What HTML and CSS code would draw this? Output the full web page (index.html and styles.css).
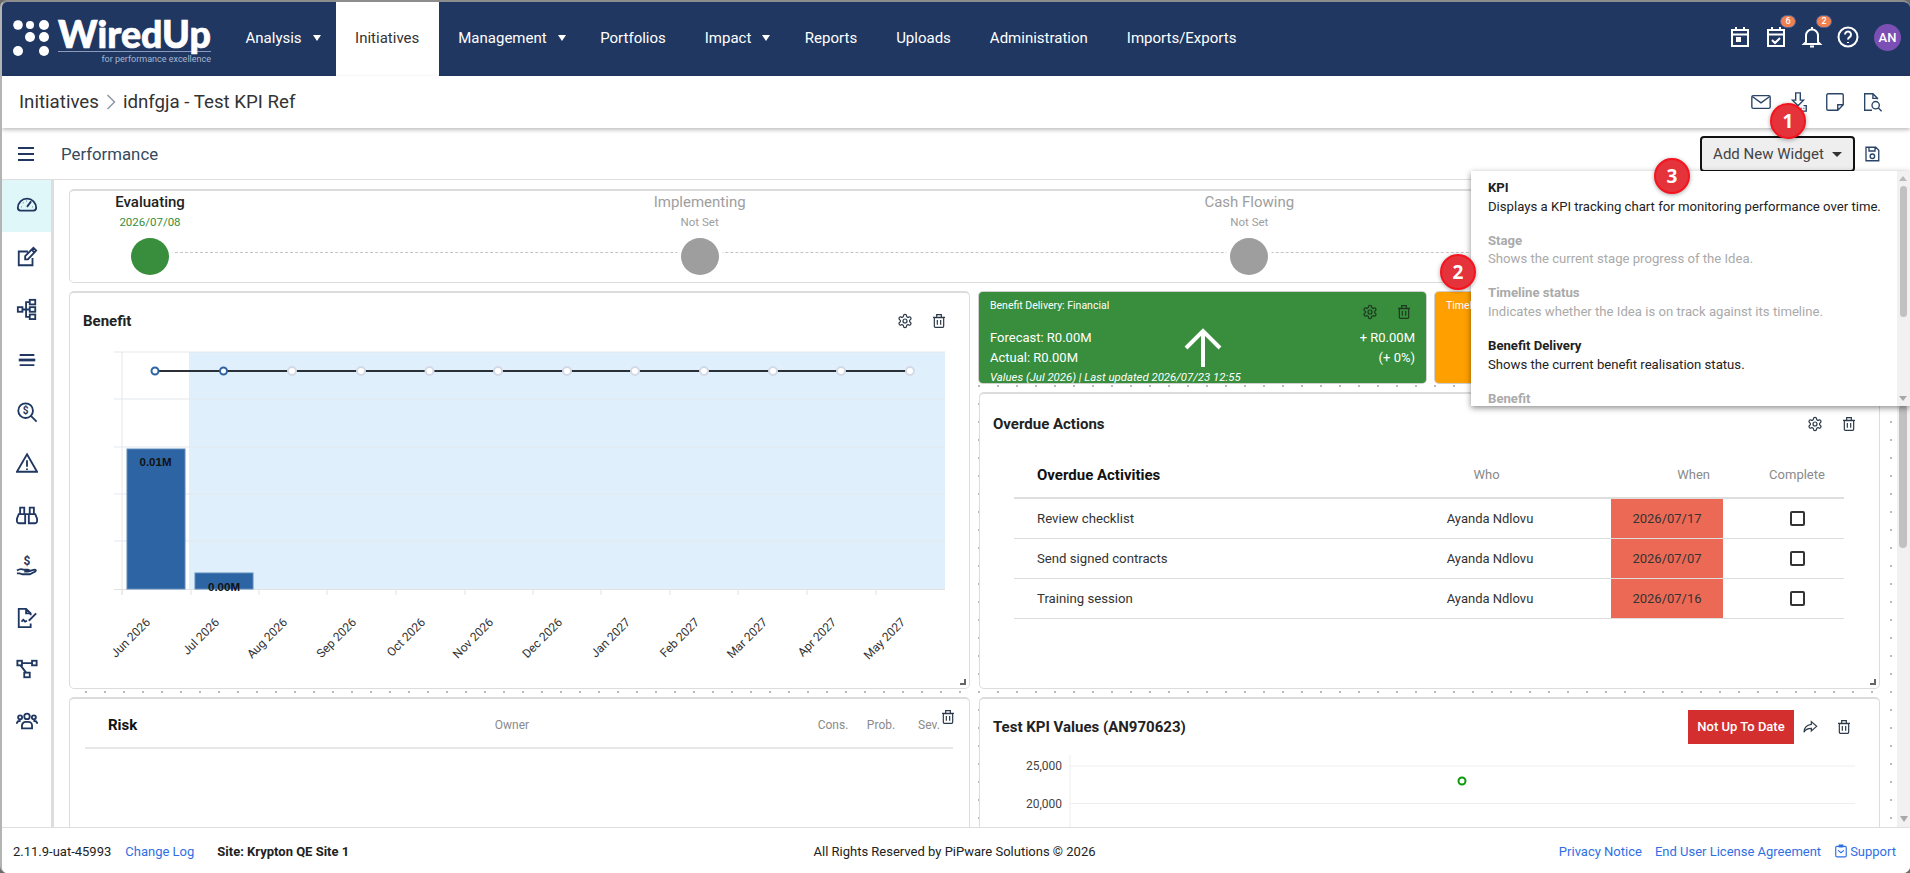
FILE: index.html
```html
<!DOCTYPE html>
<html lang="en">
<head>
  <meta charset="UTF-8">
  <title>WiredUp - Performance</title>
  <link rel="stylesheet" href="styles.css">
</head>
<body>
  <svg class="sprite" width="0" height="0">
    <defs>
      <symbol id="i-gear" viewBox="0 0 24 24"><path d="M12.22 2h-.44a2 2 0 0 0-2 2v.18a2 2 0 0 1-1 1.73l-.43.25a2 2 0 0 1-2 0l-.15-.08a2 2 0 0 0-2.73.73l-.22.38a2 2 0 0 0 .73 2.73l.15.1a2 2 0 0 1 1 1.72v.51a2 2 0 0 1-1 1.74l-.15.09a2 2 0 0 0-.73 2.73l.22.38a2 2 0 0 0 2.73.73l.15-.08a2 2 0 0 1 2 0l.43.25a2 2 0 0 1 1 1.73V20a2 2 0 0 0 2 2h.44a2 2 0 0 0 2-2v-.18a2 2 0 0 1 1-1.73l.43-.25a2 2 0 0 1 2 0l.15.08a2 2 0 0 0 2.73-.73l.22-.39a2 2 0 0 0-.73-2.73l-.15-.08a2 2 0 0 1-1-1.74v-.5a2 2 0 0 1 1-1.74l.15-.09a2 2 0 0 0 .73-2.73l-.22-.38a2 2 0 0 0-2.73-.73l-.15.08a2 2 0 0 1-2 0l-.43-.25a2 2 0 0 1-1-1.73V4a2 2 0 0 0-2-2z"/><circle cx="12" cy="12" r="3"/></symbol>
      <symbol id="i-trash" viewBox="0 0 24 24"><path d="M5 7h14v13a1.5 1.5 0 0 1-1.5 1.5h-11A1.5 1.5 0 0 1 5 20zM3 6.500h18M8.500 6V2.500h7V6M9.500 10.500v7M14.500 10.500v7"/></symbol>
    </defs>
  </svg>

  <div class="window">
    <header class="topbar">
      <div class="logo">
        <svg class="logo-dots" width="40" height="40" viewBox="0 0 40 40">
          <circle cx="6" cy="8" r="4.800"/><circle cx="18" cy="8" r="4"/><circle cx="32" cy="8" r="5"/>
          <circle cx="18" cy="20" r="5"/><circle cx="32" cy="20" r="5"/>
          <circle cx="6" cy="34" r="5"/><circle cx="32" cy="34" r="5"/>
        </svg>
        <div class="logo-type">
          <div class="logo-word">WiredUp</div>
          <div class="logo-tag">for performance excellence</div>
        </div>
      </div>
      <nav class="nav">
        <a class="nav-item has-caret">Analysis</a>
        <a class="nav-item active">Initiatives</a>
        <a class="nav-item has-caret">Management</a>
        <a class="nav-item">Portfolios</a>
        <a class="nav-item has-caret">Impact</a>
        <a class="nav-item">Reports</a>
        <a class="nav-item">Uploads</a>
        <a class="nav-item">Administration</a>
        <a class="nav-item">Imports/Exports</a>
      </nav>
      <div class="top-icons">
        <span class="top-icon">
          <svg viewBox="0 0 24 24"><path d="M4 5h16v16H4zM4 9.500h16M8 2v4M16 2v4"/><rect class="fill" x="8" y="12" width="5" height="5"/></svg>
        </span>
        <span class="top-icon">
          <svg viewBox="0 0 24 24"><path d="M4 5h16v16H4zM4 9.500h16M8 2v4M16 2v4M8 15l3 3 5-5"/></svg>
          <b class="badge">6</b>
        </span>
        <span class="top-icon">
          <svg viewBox="0 0 24 24"><path d="M6 17V10.500a6 6 0 0 1 12 0V17l2 2H4zM10 21.500h4M12 2v2"/></svg>
          <b class="badge">2</b>
        </span>
        <span class="top-icon">
          <svg viewBox="0 0 24 24"><circle cx="12" cy="12" r="9.500"/><path d="M9 9.500a3 3 0 1 1 4.500 2.600c-1 .6-1.500 1.200-1.500 2.400M12 17v1"/></svg>
        </span>
        <span class="avatar">AN</span>
      </div>
    </header>

    <div class="crumbs">
      <div class="crumb-path">
        <span>Initiatives</span>
        <svg class="crumb-sep" width="10" height="18" viewBox="0 0 10 18"><path d="M1.500 2l7 7-7 7"/></svg>
        <span>idnfgja - Test KPI Ref</span>
      </div>
      <div class="crumb-icons">
        <svg viewBox="0 0 24 24"><rect x="2" y="5" width="20" height="14" rx="1.500"/><path d="M2.500 6l9.500 7 9.500-7"/></svg>
        <svg viewBox="0 0 24 24"><path d="M9.500 2h5v8h3.500l-6 6-6-6h3.500zM3 16v6h18v-6h-3"/><path d="M15 19h1M18 19h1"/></svg>
        <svg viewBox="0 0 24 24"><path d="M4.500 3h15A1.500 1.500 0 0 1 21 4.500V15l-6 6H4.500A1.500 1.500 0 0 1 3 19.500v-15A1.500 1.500 0 0 1 4.500 3zM15 21v-6h6"/></svg>
        <svg viewBox="0 0 24 24"><path d="M12 21H4V3h9l5 5v1M13 3v5h5"/><circle cx="16" cy="15.500" r="4"/><path d="M19 18.500l3.500 3.500"/></svg>
      </div>
    </div>

    <div class="toolbar">
      <svg class="burger" width="18" height="16" viewBox="0 0 18 16"><path d="M1 2h16M1 8h16M1 14h16"/></svg>
      <span class="toolbar-title">Performance</span>
      <button class="add-btn">Add New Widget<i class="btn-caret"></i></button>
      <svg class="save-icon" viewBox="0 0 24 24"><path d="M4 3h13l4 4v14H4zM8 3v5h8V3"/><circle cx="12.500" cy="15" r="3"/></svg>
    </div>

    <div class="workspace">
      <aside class="sidebar">
        <a class="side-item active"><svg viewBox="0 0 24 24"><path d="M2 14a10 10 0 0 1 20 0 3 3 0 0 1-3 3H5a3 3 0 0 1-3-3zM12 13l4.500-6"/><path class="dots" d="M6 13h.5M7.500 8.500h.5M11.500 6.500h.5M18 13h.5"/></svg></a>
        <a class="side-item"><svg viewBox="0 0 24 24"><path d="M13 6H3v15h15v-8M10 14.500V11l9-9 3 3-9 9.500zM17 4l3 3"/></svg></a>
        <a class="side-item"><svg viewBox="0 0 24 24"><rect x="2" y="10" width="5" height="5"/><rect x="15" y="2" width="6" height="5"/><rect x="15" y="10" width="6" height="5"/><rect x="15" y="18" width="6" height="5"/><path d="M7 12.500h4M15 4.500h-4v16h4M11 12.500h4"/></svg></a>
        <a class="side-item"><svg viewBox="0 0 24 24"><path d="M4 6.500h16M4 17.500h16"/><path class="thick" d="M3 12h18"/></svg></a>
        <a class="side-item"><svg viewBox="0 0 24 24"><circle cx="10.500" cy="10.500" r="8"/><path d="M16.500 16.500l6 6"/><text x="10.500" y="14" class="icon-text">$</text></svg></a>
        <a class="side-item"><svg viewBox="0 0 24 24"><path d="M12 2.500L23 21.500H1zM12 9v7M12 18v1.500"/></svg></a>
        <a class="side-item"><svg viewBox="0 0 24 24"><path d="M4.500 4h4.500v7h1v10H3.500A2.500 2.500 0 0 1 1 18.500V16l2-5h1.500zM19.500 4H15v7h-1v10h6.500a2.500 2.500 0 0 0 2.500-2.500V16l-2-5h-1.500zM10 11h4M4 11h5M15 11h5"/></svg></a>
        <a class="side-item"><svg viewBox="0 0 24 24"><path d="M1 17c3-2 5-2 7-1h5c2 0 2 2 0 2H9M13 18l7-2c2 0 2 1 1 2l-6 3H7l-3-1H1"/><text x="12" y="11" class="icon-text big">$</text></svg></a>
        <a class="side-item"><svg viewBox="0 0 24 24"><path d="M16 9V7l-5-5H3v20h13v-4M11 2v5h5M6 16l2-2 2 2 2-1M14 15l8-8"/></svg></a>
        <a class="side-item"><svg viewBox="0 0 24 24"><rect x="1.500" y="3" width="5" height="5"/><rect x="17.500" y="3" width="5" height="5"/><rect x="9" y="16" width="6" height="5"/><path d="M6.500 5.500h11M5 8l6 8"/></svg></a>
        <a class="side-item"><svg viewBox="0 0 24 24"><circle cx="12" cy="7" r="3"/><circle cx="4.500" cy="8" r="2.200"/><circle cx="19.500" cy="8" r="2.200"/><path d="M6.500 20v-3a4 4 0 0 1 4-4h3a4 4 0 0 1 4 4v3zM1 15v-1a3 3 0 0 1 3-2h1M23 15v-1a3 3 0 0 0-3-2h-1"/></svg></a>
      </aside>

      <main class="canvas">
        <div class="board">
          <section class="card stage-card">
            <div class="stage done"><div class="stage-name">Evaluating</div><div class="stage-date">2026/07/08</div><div class="stage-dot"></div></div>
            <div class="stage"><div class="stage-name">Implementing</div><div class="stage-date">Not Set</div><div class="stage-dot"></div></div>
            <div class="stage"><div class="stage-name">Cash Flowing</div><div class="stage-date">Not Set</div><div class="stage-dot"></div></div>
            <div class="stage"><div class="stage-name"></div><div class="stage-date"></div><div class="stage-dot"></div></div>
          </section>

          <section class="card benefit-card">
            <div class="card-head">
              <h3>Benefit</h3>
              <div class="card-tools">
                <svg class="tool"><use href="#i-gear"/></svg>
                <svg class="tool"><use href="#i-trash"/></svg>
              </div>
            </div>
            <svg class="chart" width="899" height="340" viewBox="70 345 899 340">
              <rect x="189" y="352" width="756" height="237" fill="#dfeffc"/>
              <g class="grid">
                <path d="M114 352H945M114 399H945M114 447H945M114 494H945M114 541H945"/>
                <path d="M122 352V595"/>
              </g>
              <path class="axis" d="M114 589.500H945M122 589V595M191 589V595M259 589V595M327 589V595M396 589V595M465 589V595M533 589V595M601 589V595M670 589V595M738 589V595M807 589V595M876 589V595"/>
              <rect class="bar" x="127" y="449" width="58" height="140"/>
              <rect class="bar" x="195" y="573" width="58" height="16"/>
              <text class="bar-label" x="155.500" y="466">0.01M</text>
              <text class="bar-label" x="224" y="591">0.00M</text>
              <path class="line" d="M155 371H910"/>
              <circle class="pt" cx="155" cy="371" r="3.500"/>
              <circle class="pt" cx="223.500" cy="371" r="3.500"/>
              <g class="pt-empty">
                <circle cx="292" cy="371" r="4"/><circle cx="361" cy="371" r="4"/><circle cx="429.500" cy="371" r="4"/><circle cx="498" cy="371" r="4"/><circle cx="567" cy="371" r="4"/><circle cx="635" cy="371" r="4"/><circle cx="704" cy="371" r="4"/><circle cx="773" cy="371" r="4"/><circle cx="841" cy="371" r="4"/><circle cx="910" cy="371" r="4"/>
              </g>
              <g class="tick-labels">
                <text transform="translate(151 623) rotate(-45)">Jun 2026</text>
                <text transform="translate(220 623) rotate(-45)">Jul 2026</text>
                <text transform="translate(288 623) rotate(-45)">Aug 2026</text>
                <text transform="translate(357 623) rotate(-45)">Sep 2026</text>
                <text transform="translate(426 623) rotate(-45)">Oct 2026</text>
                <text transform="translate(494 623) rotate(-45)">Nov 2026</text>
                <text transform="translate(563 623) rotate(-45)">Dec 2026</text>
                <text transform="translate(631 623) rotate(-45)">Jan 2027</text>
                <text transform="translate(700 623) rotate(-45)">Feb 2027</text>
                <text transform="translate(768 623) rotate(-45)">Mar 2027</text>
                <text transform="translate(837 623) rotate(-45)">Apr 2027</text>
                <text transform="translate(906 623) rotate(-45)">May 2027</text>
              </g>
            </svg>
            <i class="resize"></i>
          </section>

          <div class="status-row">
            <section class="delivery">
              <div class="delivery-head">
                <span>Benefit Delivery: Financial</span>
                <div class="card-tools">
                  <svg class="tool"><use href="#i-gear"/></svg>
                  <svg class="tool"><use href="#i-trash"/></svg>
                </div>
              </div>
              <div class="delivery-body">
                <div>Forecast: R0.00M<br>Actual: R0.00M</div>
                <svg class="up-arrow" width="40" height="40" viewBox="0 0 40 40"><path d="M20 39V3M3 20L20 3l17 17"/></svg>
                <div class="delivery-delta">+ R0.00M<br>(+ 0%)</div>
              </div>
              <div class="delivery-foot">Values (Jul 2026) | Last updated 2026/07/23 12:55</div>
            </section>
            <section class="timeline"><div class="delivery-head"><span>Timeli</span></div></section>
          </div>

          <section class="card overdue-card">
            <div class="card-head">
              <h3>Overdue Actions</h3>
              <div class="card-tools">
                <svg class="tool"><use href="#i-gear"/></svg>
                <svg class="tool"><use href="#i-trash"/></svg>
              </div>
            </div>
            <table class="overdue">
              <thead>
                <tr><th class="col-what">Overdue Activities</th><th class="col-who">Who</th><th class="col-when">When</th><th class="col-done">Complete</th></tr>
              </thead>
              <tbody>
                <tr><td class="col-what">Review checklist</td><td class="col-who">Ayanda Ndlovu</td><td class="late">2026/07/17</td><td class="col-done"><i class="check"></i></td></tr>
                <tr><td class="col-what">Send signed contracts</td><td class="col-who">Ayanda Ndlovu</td><td class="late">2026/07/07</td><td class="col-done"><i class="check"></i></td></tr>
                <tr><td class="col-what">Training session</td><td class="col-who">Ayanda Ndlovu</td><td class="late">2026/07/16</td><td class="col-done"><i class="check"></i></td></tr>
              </tbody>
            </table>
            <i class="resize"></i>
          </section>

          <section class="card risk-card">
            <div class="risk-head">
              <h3>Risk</h3>
              <span class="risk-col">Owner</span>
              <span></span>
              <span class="risk-col">Cons.</span>
              <span class="risk-col">Prob.</span>
              <span class="risk-col">Sev.</span>
            </div>
            <svg class="tool risk-trash"><use href="#i-trash"/></svg>
          </section>

          <section class="card kpi-card">
            <div class="card-head kpi-head">
              <h3>Test KPI Values (AN970623)</h3>
              <div class="card-tools">
                <span class="stale">Not Up To Date</span>
                <svg class="tool" viewBox="0 0 24 24"><path d="M14 4l8 7-8 7v-4c-5 0-9 1-11 6 0-7 4-11 11-12z"/></svg>
                <svg class="tool"><use href="#i-trash"/></svg>
              </div>
            </div>
            <svg class="chart" width="899" height="120" viewBox="980 755 899 120">
              <path class="kpi-grid" d="M1070 766H1855M1070 803.500H1855M1070 755V875"/>
              <text class="kpi-tick" x="1062" y="770">25,000</text>
              <text class="kpi-tick" x="1062" y="808">20,000</text>
              <circle class="kpi-pt" cx="1462" cy="781" r="3.500"/>
            </svg>
          </section>
        </div>
      </main>

      <div class="rail">
        <div class="rail-thumb"></div>
        <div class="rail-arrow"></div>
      </div>
    </div>

    <footer class="footer">
      <div class="foot-left">
        <span>2.11.9-uat-45993</span>
        <a>Change Log</a>
        <b>Site: Krypton QE Site 1</b>
      </div>
      <div class="foot-mid">All Rights Reserved by PiPware Solutions © 2026</div>
      <div class="foot-right">
        <a>Privacy Notice</a>
        <a>End User License Agreement</a>
        <a class="support"><svg width="14" height="14" viewBox="0 0 24 24"><path d="M9 2h6v3H9zM5 4h14a2 2 0 0 1 2 2v14a2 2 0 0 1-2 2H5a2 2 0 0 1-2-2V6a2 2 0 0 1 2-2zM7 11l5 4 5-4"/></svg>Support</a>
      </div>
    </footer>

    <!-- open widget menu and the numbered callouts lie over the page -->
    <div class="widget-menu">
      <div class="menu-list">
        <div class="menu-item"><b>KPI</b><span>Displays a KPI tracking chart for monitoring performance over time.</span></div>
        <div class="menu-item off"><b>Stage</b><span>Shows the current stage progress of the Idea.</span></div>
        <div class="menu-item off"><b>Timeline status</b><span>Indicates whether the Idea is on track against its timeline.</span></div>
        <div class="menu-item"><b>Benefit Delivery</b><span>Shows the current benefit realisation status.</span></div>
        <div class="menu-item off"><b>Benefit</b></div>
      </div>
      <div class="menu-rail">
        <div class="menu-arrow up"></div>
        <div class="menu-thumb"></div>
        <div class="menu-arrow down"></div>
      </div>
    </div>
    <div class="callout c1">1</div>
    <div class="callout c2">2</div>
    <div class="callout c3">3</div>
  </div>
</body>
</html>
```

FILE: styles.css
```css
:root {
  --navy: #1f3761;
  --icon: #2b4569;
  --line: #dedede;
  --link: #2f6fe4;
}

* {
  box-sizing: border-box;
}

html, body {
  margin: 0;
  height: 100%;
  background: #6b6b6b;
}

body {
  font-family: Roboto, "Liberation Sans", sans-serif;
  font-size: 13px;
  color: #333;
  overflow: hidden;
}

.sprite {
  position: absolute;
}

.window {
  position: relative;
  width: 1910px;
  height: 873px;
  display: flex;
  flex-direction: column;
  background: #fff;
  border-top: 2px solid #8d8d8d;
  border-left: 2px solid #b4b4b4;
  border-radius: 7px;
  overflow: hidden;
}

/* top bar */
.topbar {
  height: 74px;
  flex: none;
  display: flex;
  align-items: stretch;
  background: var(--navy);
  color: #fff;
}

.logo {
  width: 224px;
  display: flex;
  padding: 15px 0 0 10px;
  gap: 6px;
}

.logo-dots {
  fill: #fff;
}

.logo-word {
  font-family: Lato, "Open Sans", sans-serif;
  font-weight: 900;
  font-size: 37.500px;
  line-height: 33px;
  -webkit-text-stroke: 0.7px #fff;
  border-bottom: 1px solid #8a9ab8;
  padding-bottom: 1px;
  width: 153px;
  white-space: nowrap;
}

.logo-tag {
  text-align: right;
  font-size: 9px;
  line-height: 15px;
  width: 153px;
  color: #aab6cc;
}

.nav {
  display: flex;
}

.nav-item {
  display: flex;
  align-items: center;
  padding: 0 19.500px 2px;
  font-size: 15px;
  color: #fff;
}

.nav-item.has-caret {
  padding-right: 15px;
}

.nav-item.has-caret::after {
  content: "";
  margin-left: 11px;
  border-left: 4px solid transparent;
  border-right: 4px solid transparent;
  border-top: 6px solid #fff;
}

.nav-item.active {
  background: #fff;
  color: #333;
}

.top-icons {
  margin-left: auto;
  display: flex;
  align-items: center;
  gap: 12px;
  padding: 0 9px 4px 0;
}

.top-icon {
  position: relative;
  width: 24px;
  height: 24px;
}

.top-icon svg {
  width: 24px;
  height: 24px;
  fill: none;
  stroke: #fff;
  stroke-width: 2;
}

.top-icon .fill {
  fill: #fff;
  stroke: none;
}

.badge {
  position: absolute;
  top: -10px;
  right: -8px;
  width: 16px;
  height: 13px;
  border-radius: 7px;
  background: #f08050;
  border: 1px solid #4a5f9a;
  font-size: 9px;
  line-height: 11px;
  font-weight: 500;
  text-align: center;
}

.avatar {
  width: 27px;
  height: 27px;
  margin-left: 2px;
  border-radius: 50%;
  background: #7b4fb3;
  font-size: 13px;
  font-weight: 500;
  line-height: 27px;
  text-align: center;
}

/* breadcrumb */
.crumbs {
  height: 52px;
  flex: none;
  position: relative;
  z-index: 2;
  display: flex;
  align-items: center;
  justify-content: space-between;
  padding: 0 27px 0 17px;
  background: #fff;
  box-shadow: 0 2px 4px rgba(0, 0, 0, 0.25);
}

.crumb-path {
  display: flex;
  align-items: center;
  gap: 7px;
  font-size: 18.700px;
  color: #333;
}

.crumb-sep {
  fill: none;
  stroke: #8f98a6;
  stroke-width: 1.5;
}

.crumb-icons {
  display: flex;
  gap: 15px;
}

.crumb-icons svg {
  width: 22px;
  height: 22px;
  fill: none;
  stroke: var(--icon);
  stroke-width: 1.500;
}

/* toolbar */
.toolbar {
  height: 52px;
  flex: none;
  display: flex;
  align-items: center;
  padding: 0 29px 0 15px;
  border-bottom: 1px solid var(--line);
}

.burger {
  fill: none;
  stroke: var(--navy);
  stroke-width: 2;
}

.toolbar-title {
  margin-left: 26px;
  font-size: 16.800px;
  color: #34495e;
}

.add-btn {
  margin-left: auto;
  width: 155px;
  height: 36px;
  border: 2px solid #111;
  border-radius: 4px;
  background: #eee;
  color: #444;
  font: 15px Roboto, sans-serif;
}

.btn-caret {
  display: inline-block;
  margin-left: 8px;
  vertical-align: 2px;
  border-left: 5px solid transparent;
  border-right: 5px solid transparent;
  border-top: 5px solid #333;
}

.save-icon {
  width: 18px;
  height: 18px;
  margin-left: 8px;
  fill: none;
  stroke: var(--icon);
  stroke-width: 1.8;
}

/* main area */
.workspace {
  flex: 1;
  min-height: 0;
  display: flex;
}

.sidebar {
  width: 52px;
  flex: none;
  border-right: 3px solid #ddd;
  padding-bottom: 4px;
}

.side-item {
  height: 51.500px;
  display: flex;
  align-items: center;
  justify-content: center;
}

.side-item.active {
  background: #e0f7fa;
}

.side-item svg {
  width: 22px;
  height: 22px;
  fill: none;
  stroke: var(--navy);
  stroke-width: 2;
}

.side-item .dots {
  stroke-width: 1.500;
}

.side-item .thick {
  stroke-width: 3;
}

.icon-text {
  font: 700 11px Roboto, sans-serif;
  fill: var(--navy);
  stroke: none;
  text-anchor: middle;
}

.icon-text.big {
  font-size: 13px;
}

.canvas {
  flex: 1;
  min-width: 0;
  overflow: hidden;
  padding: 9px 0 0 15px;
}

.board {
  position: relative;
  display: grid;
  grid-template-columns: 901px 901px;
  grid-template-rows: 94px 93px 297px 200px;
  column-gap: 9px;
  row-gap: 8px;
}

/* faint layout grid that shows in the gaps below the stage card */
.board::before {
  content: "";
  position: absolute;
  inset: 100px 0 0 0;
  background-image: radial-gradient(circle, #777 0.6px, transparent 1.1px);
  background-size: 19px 18px;
  background-position: 7.5px -2px;
}

.card, .status-row {
  position: relative;
}

.card {
  background: #fff;
  border: 1px solid #dcdcdc;
  border-top: 2px solid #dcdcdc;
  border-radius: 5px;
}

.card h3 {
  margin: 0;
  font-size: 15px;
  font-weight: 700;
  color: #222;
}

.card-head {
  height: 58px;
  display: flex;
  align-items: center;
  justify-content: space-between;
  padding: 1px 22px 0 13px;
}

.card-tools {
  display: flex;
  align-items: center;
  gap: 18px;
}

.tool {
  width: 16px;
  height: 16px;
  fill: none;
  stroke: #2c3a4a;
  stroke-width: 1.8;
}

.resize {
  position: absolute;
  right: 3px;
  bottom: 3px;
  width: 6px;
  height: 6px;
  border-right: 2px solid #666;
  border-bottom: 2px solid #666;
}

/* stage tracker */
.stage-card {
  grid-column: 1 / 3;
  display: flex;
  justify-content: space-between;
}

.stage-card::before {
  content: "";
  position: absolute;
  left: 80px;
  right: 80px;
  top: 61px;
  border-top: 1px dashed #c4c4c4;
}

.stage {
  position: relative;
  width: 160px;
  display: flex;
  flex-direction: column;
  align-items: center;
  color: #9e9e9e;
}

.stage-name {
  margin-top: 1px;
  min-height: 20px;
  font-size: 15px;
  line-height: 20px;
}

.stage-date {
  margin-top: 3px;
  min-height: 14px;
  font-size: 11.500px;
  line-height: 14px;
}

.stage-dot {
  margin-top: 9px;
  width: 38px;
  height: 37px;
  border-radius: 50%;
  background: #9e9e9e;
  box-shadow: 0 0 0 4px #fff;
}

.stage.done .stage-name {
  color: #222;
  font-weight: 500;
}

.stage.done .stage-date {
  color: #388e3c;
}

.stage.done .stage-dot {
  background: #388e3c;
}

/* benefit */
.benefit-card {
  grid-row: 2 / 4;
}

.benefit-card .card-head {
  height: 52px;
  padding-top: 4px;
}

.chart {
  display: block;
}

.grid path {
  fill: none;
  stroke: #e3e8ec;
}

.axis {
  fill: none;
  stroke: #e2e2e2;
}

.bar {
  fill: #2d64a3;
  stroke: #5f8cbd;
}

.bar-label {
  font: 700 11.500px "Liberation Sans", sans-serif;
  fill: #111;
  text-anchor: middle;
}

.line {
  stroke: #2b2f36;
  stroke-width: 2;
}

.pt {
  fill: #fff;
  stroke: #2d64a3;
  stroke-width: 2;
}

.pt-empty circle {
  fill: #fff;
  stroke: #d3d9e6;
  stroke-width: 2;
}

.tick-labels text {
  font: 12px Roboto, sans-serif;
  fill: #333;
  text-anchor: end;
}

/* status widgets */
.status-row {
  display: flex;
  gap: 9px;
  padding-top: 1px;
  height: 92px;
}

.delivery, .timeline {
  border-radius: 4px;
  color: #fff;
  padding: 6px 11px 0;
  box-shadow: 0 0 0 1px #d0d0d0;
}

.delivery {
  width: 447px;
  background: #388e3c;
}

.timeline {
  flex: 1;
  background: #ffa000;
}

.delivery-head {
  height: 24px;
  display: flex;
  justify-content: space-between;
  font-size: 10.500px;
  line-height: 16px;
}

.delivery-head .card-tools {
  margin-top: 4px;
  padding-right: 3px;
}

.delivery-head .tool {
  stroke: #1d3a20;
}

.delivery-body {
  margin-top: 6px;
  height: 40px;
  display: grid;
  grid-template-columns: 1fr auto 1fr;
  font-size: 13px;
  line-height: 20px;
}

.up-arrow {
  fill: none;
  stroke: #fff;
  stroke-width: 4;
}

.delivery-delta {
  text-align: right;
}

.delivery-foot {
  font-size: 11.400px;
  font-style: italic;
  line-height: 18px;
}

/* overdue table */
.overdue {
  width: 830px;
  margin: 0 0 0 34px;
  border-collapse: collapse;
  table-layout: fixed;
}

.overdue th {
  height: 46px;
  border-bottom: 2px solid var(--line);
  font-size: 13px;
  font-weight: 400;
  color: #8a8a8a;
}

.overdue td {
  height: 40px;
  border-bottom: 1px solid var(--line);
  font-size: 13px;
  color: #333;
}

.col-what {
  width: 355px;
  padding-left: 23px;
  text-align: left;
}

.overdue td.col-what {
  font-size: 13.200px;
}

.overdue th.col-what {
  font-size: 15px;
  font-weight: 700;
  color: #111;
}

.col-who {
  width: 242px;
  text-align: center;
}

.overdue th.col-who {
  padding-right: 8px;
}

.col-when {
  width: 112px;
  text-align: right;
  padding-right: 13px;
}

.col-done {
  width: 121px;
  padding-left: 28px;
  text-align: center;
}

.late {
  background: #ec6a55;
  text-align: center;
  color: #111;
}

.check {
  display: inline-block;
  width: 15px;
  height: 15px;
  vertical-align: middle;
  border: 2px solid #333;
  border-radius: 2px;
}

/* risk */
.risk-head {
  margin-left: 15px;
  width: 868px;
  padding: 16px 0 12px 23px;
  display: grid;
  grid-template-columns: 354px 100px 247px 48px 48px 48px;
  align-items: center;
  border-bottom: 2px solid #e8e8e8;
}

.risk-head h3 {
  line-height: 20px;
  color: #111;
}

.risk-col {
  text-align: center;
  font-size: 12px;
  color: #8a8a8a;
}

.risk-trash {
  position: absolute;
  right: 13px;
  top: 10px;
}

/* kpi */
.kpi-head {
  padding: 0 27px 0 13px;
  height: 56px;
}

.stale {
  width: 106px;
  height: 34px;
  margin-right: -10px;
  background: #d32f2f;
  color: #fff;
  font-size: 13px;
  font-weight: 500;
  line-height: 34px;
  text-align: center;
}

.kpi-grid {
  fill: none;
  stroke: #eee;
}

.kpi-tick {
  font: 12px Roboto, sans-serif;
  fill: #444;
  text-anchor: end;
}

.kpi-pt {
  fill: #fff;
  stroke: #0a9a0a;
  stroke-width: 2;
}

/* page scrollbar */
.rail {
  position: relative;
  width: 13px;
  flex: none;
  background: #f1f1f1;
  padding: 225px 0 0 2px;
}

.rail-thumb {
  width: 8px;
  height: 143px;
  border-radius: 4px;
  background: #c1c1c1;
}

.rail-arrow {
  position: absolute;
  right: 2px;
  bottom: 5px;
  border-left: 4px solid transparent;
  border-right: 4px solid transparent;
  border-top: 6px solid #a8a8a8;
}

/* footer */
.footer {
  height: 46px;
  flex: none;
  position: relative;
  z-index: 1;
  display: grid;
  grid-template-columns: 1fr auto 1fr;
  align-items: center;
  padding: 1px 14px 0 11px;
  background: #fff;
  border-top: 1px solid var(--line);
  font-size: 13px;
  color: #222;
}

.footer a {
  color: var(--link);
}

.foot-left {
  display: flex;
  gap: 14px;
}

.foot-left b {
  margin-left: 9px;
}

.foot-right {
  display: flex;
  justify-content: flex-end;
  gap: 13px;
}

.support {
  display: flex;
  align-items: center;
  gap: 2px;
}

.support svg {
  fill: none;
  stroke: var(--link);
  stroke-width: 2;
}

/* widget dropdown */
.widget-menu {
  position: absolute;
  z-index: 5;
  left: 1469px;
  top: 169px;
  width: 439px;
  height: 235px;
  display: flex;
  background: #fff;
  box-shadow: 0 2px 6px rgba(0, 0, 0, 0.45);
}

.menu-list {
  flex: 1;
  overflow: hidden;
  padding: 8px 0 0 17px;
}

.menu-item {
  height: 52.700px;
  display: flex;
  flex-direction: column;
  font-size: 13.150px;
  line-height: 18.500px;
  white-space: nowrap;
  color: #222;
}

.menu-item b {
  font-weight: 700;
}

.menu-item.off {
  color: #aaa;
}

.menu-rail {
  position: relative;
  width: 13px;
  background: #f1f1f1;
  padding: 15px 0 0 3px;
}

.menu-thumb {
  width: 7px;
  height: 131px;
  border-radius: 4px;
  background: #c1c1c1;
}

.menu-arrow {
  position: absolute;
  left: 2px;
  border-left: 4px solid transparent;
  border-right: 4px solid transparent;
}

.menu-arrow.up {
  top: 5px;
  border-bottom: 5px solid #bbb;
}

.menu-arrow.down {
  bottom: 5px;
  border-top: 5px solid #a8a8a8;
}

/* numbered callouts */
.callout {
  position: absolute;
  z-index: 6;
  width: 36px;
  height: 36px;
  border-radius: 50%;
  background: #e5333b;
  border: 2px solid #f5141e;
  box-shadow: 0 1px 4px rgba(0, 0, 0, 0.35);
  color: #fff;
  font-family: "Open Sans", sans-serif;
  font-size: 19px;
  font-weight: 700;
  line-height: 32px;
  text-align: center;
}

.c1 {
  left: 1768px;
  top: 101px;
}

.c2 {
  left: 1438px;
  top: 252px;
}

.c3 {
  left: 1652px;
  top: 156px;
}
```
